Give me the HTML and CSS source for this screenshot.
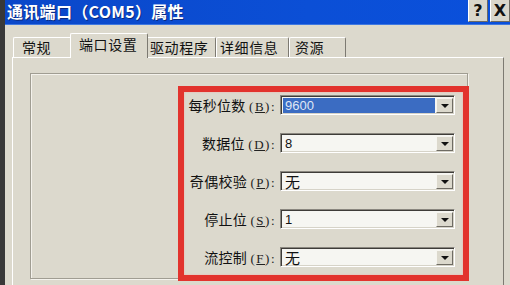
FILE: index.html
```html
<!DOCTYPE html>
<html lang="zh-CN">
<head>
    <meta charset="UTF-8">
    <meta name="viewport" content="width=device-width, initial-scale=1.0">
    <title>通讯端口（COM5）属性</title>
    <link rel="stylesheet" href="styles.css">
</head>
<body>
    <div class="window">
        <div class="titlebar">
            <span class="title">通讯端口（COM5）属性</span>
            <div class="caption-buttons">
                <span class="cap-btn">?</span>
                <span class="cap-btn">X</span>
            </div>
        </div>

        <div class="tabs">
            <div class="tab tab-general">常规</div>
            <div class="tab tab-port active">端口设置</div>
            <div class="tab tab-driver">驱动程序</div>
            <div class="tab tab-details">详细信息</div>
            <div class="tab tab-res">资源</div>
        </div>

        <div class="panel">
            <div class="group">
                <div class="settings">
                    <label class="field-label">每秒位数 <span class="key">(<u>B</u>):</span></label>
                    <div class="combo">
                        <span class="value selected">9600</span>
                        <span class="drop"><i class="arrow"></i></span>
                    </div>

                    <label class="field-label">数据位 <span class="key">(<u>D</u>):</span></label>
                    <div class="combo">
                        <span class="value">8</span>
                        <span class="drop"><i class="arrow"></i></span>
                    </div>

                    <label class="field-label">奇偶校验 <span class="key">(<u>P</u>):</span></label>
                    <div class="combo">
                        <span class="value cjk">无</span>
                        <span class="drop"><i class="arrow"></i></span>
                    </div>

                    <label class="field-label">停止位 <span class="key">(<u>S</u>):</span></label>
                    <div class="combo">
                        <span class="value">1</span>
                        <span class="drop"><i class="arrow"></i></span>
                    </div>

                    <label class="field-label">流控制 <span class="key">(<u>F</u>):</span></label>
                    <div class="combo">
                        <span class="value cjk">无</span>
                        <span class="drop"><i class="arrow"></i></span>
                    </div>
                </div>

                <!-- marcação vermelha por cima dos campos -->
                <div class="highlight"></div>
            </div>
        </div>
    </div>
</body>
</html>
```

FILE: styles.css
```css
body {
    margin: 0;
    background-color: #383838;
    font-family: "Noto Sans CJK SC", "Liberation Sans", sans-serif;
    height: 285px;
    overflow: hidden;
}

.window {
    margin-left: 5px;
    height: 285px;
    background-color: #dcd9cd;
    overflow: hidden;
}

/* barra de titulo azul */
.titlebar {
    height: 25px;
    background: linear-gradient(to right, #0a47c9, #0b4fd6 60%, #0a50dc);
    border-bottom: 1px solid #3f78e0;
    box-sizing: border-box;
    display: flex;
    align-items: flex-start;
    justify-content: space-between;
}

.title {
    color: #ffffff;
    font-weight: bold;
    font-size: 16px;
    line-height: 22px;
    padding-left: 2px;
    letter-spacing: 0.3px;
    text-shadow: 1px 1px 0 #0a2a80;
}

.caption-buttons {
    display: flex;
    gap: 2px;
}

.cap-btn {
    width: 20px;
    height: 22px;
    box-sizing: border-box;
    background-color: #d9d6cb;
    border-left: 1px solid #ffffff;
    border-right: 1px solid #6d6a62;
    border-bottom: 1px solid #6d6a62;
    font-family: "DejaVu Sans", sans-serif;
    font-weight: bold;
    font-size: 16px;
    line-height: 22px;
    text-align: center;
    color: #111;
}

/* abas */
.tabs {
    height: 33px;
    display: flex;
    align-items: flex-end;
    padding-left: 8px;
}

.tab {
    height: 20px;
    margin-bottom: 1px;
    box-sizing: border-box;
    border-top: 1px solid #ffffff;
    border-left: 1px solid #ffffff;
    border-right: 1px solid #7d7a72;
    border-radius: 2px 2px 0 0;
    font-size: 14px;
    letter-spacing: 0.6px;
    line-height: 19px;
    color: #111;
    padding-left: 8px;
}

.tab-general { width: 59px; }
.tab-driver  { width: 70px; padding-left: 3px; }
.tab-details { width: 73px; padding-left: 3px; }
.tab-res     { width: 57px; padding-left: 5px; }

.tab.active {
    width: 78px;
    height: 25px;
    margin: 0 -2px 0 -2px;
    line-height: 20px;
    background-color: #dcd9cd;
    position: relative;
    z-index: 1;
}

.panel {
    margin: -1px 6px 0 7px;
    height: 240px;
    border-top: 1px solid #ffffff;
    border-left: 1px solid #ffffff;
    border-right: 1px solid #7d7a72;
    padding: 15px 0 0 17px;
    box-sizing: border-box;
}

/* caixa de grupo com borda gravada */
.group {
    position: relative;
    width: 438px;
    height: 206px;
    box-sizing: border-box;
    border: 1px solid #a09d92;
    box-shadow: inset 1px 1px 0 #f4f2ec, 1px 1px 0 #f4f2ec;
}

.settings {
    display: grid;
    grid-template-columns: 249px 175px;
    row-gap: 16px;
    padding-top: 21px;
}

.field-label {
    text-align: right;
    padding-right: 4px;
    font-size: 14px;
    letter-spacing: 0.3px;
    line-height: 20px;
    color: #111;
    white-space: nowrap;
}

.key {
    font-family: "Liberation Serif", serif;
    font-size: 13px;
    letter-spacing: 1.5px;
    color: #222;
}

/* combo box afundado */
.combo {
    height: 20px;
    box-sizing: border-box;
    border: 1px solid;
    border-color: #8a877f #ffffff #ffffff #8a877f;
    box-shadow: inset 1px 1px 0 #3e3c38, inset -1px -1px 0 #d6d3c8;
    background-color: #f6f6f2;
    display: flex;
    padding: 2px 1px 1px 2px;
}

.value {
    flex: 1;
    font-family: "Liberation Sans", sans-serif;
    font-size: 13px;
    line-height: 15px;
    padding-left: 2px;
    color: #111;
}

.value.cjk {
    font-family: "Noto Sans CJK SC", sans-serif;
    font-size: 15px;
}

.value.selected {
    background-color: #3b6cc2;
    color: #dfe6f5;
    margin-right: 1px;
}

.drop {
    width: 17px;
    box-sizing: border-box;
    background-color: #dcd9cd;
    border: 1px solid;
    border-color: #f6f5f0 #6f6c64 #6f6c64 #f6f5f0;
    display: flex;
    align-items: center;
    justify-content: center;
}

.arrow {
    width: 0;
    height: 0;
    border-left: 4px solid transparent;
    border-right: 4px solid transparent;
    border-top: 4px solid #111;
}

/* retangulo vermelho de destaque */
.highlight {
    position: absolute;
    left: 147px;
    top: 12px;
    width: 291px;
    height: 195px;
    box-sizing: border-box;
    border: 6px solid #e2332d;
    box-shadow: inset 0 0 2px #f5a9a5;
}
```
